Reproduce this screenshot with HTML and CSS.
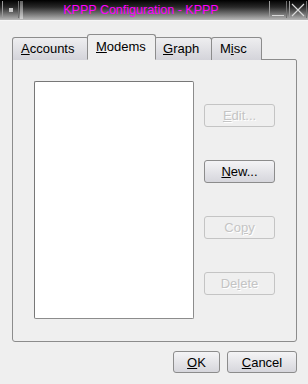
FILE: index.html
```html
<!DOCTYPE html>
<html lang="en">
<head>
    <meta charset="UTF-8">
    <title>KPPP Configuration - KPPP</title>
    <link rel="stylesheet" href="styles.css">
</head>
<body>
    <div class="window">
        <div class="titlebar">
            <div class="tb-btn tb-menu"><span class="dot"></span></div>
            <div class="tb-sep"></div>
            <div class="tb-title">KPPP Configuration - KPPP</div>
            <div class="tb-btn tb-min"><span class="bar"></span></div>
            <div class="tb-btn tb-close">
                <svg width="16" height="16" viewBox="0 0 16 16"><path d="M2 2 L14 14 M14 2 L2 14" stroke="#d8d8d8" stroke-width="1.2" fill="none"/></svg>
            </div>
        </div>

        <div class="body">
            <div class="tabs">
                <div class="tab"><u>A</u>ccounts</div>
                <div class="tab active"><u>M</u>odems</div>
                <div class="tab"><u>G</u>raph</div>
                <div class="tab">M<u>i</u>sc</div>
            </div>
            <div class="panel">
                <div class="listbox"></div>
                <div class="side">
                    <button class="btn" disabled><u>E</u>dit...</button>
                    <button class="btn"><u>N</u>ew...</button>
                    <button class="btn" disabled>Co<u>p</u>y</button>
                    <button class="btn" disabled>De<u>l</u>ete</button>
                </div>
            </div>
            <div class="footer">
                <button class="btn ok"><u>O</u>K</button>
                <button class="btn cancel"><u>C</u>ancel</button>
            </div>
        </div>
    </div>
</body>
</html>
```

FILE: styles.css
```css
body {
    margin: 0;
    background-color: #efefef;
    font-family: "Liberation Sans", Arial, sans-serif;
    font-size: 13px;
    color: #000;
}
.window {
    width: 308px;
    height: 384px;
}

/* title bar */
.titlebar {
    display: flex;
    height: 19px;
    padding-top: 1px;
    font-size: 12.5px;
    background: linear-gradient(#000 0%, #282828 35%, #808080 75%, #b8b8b8 100%);
    border-bottom: 1px solid #f6f6f6;
}
.tb-btn {
    width: 16px;
    height: 17px;
    border-left: 1px solid #9a9a9a;
    border-right: 1px solid #707070;
    display: flex;
    align-items: center;
    justify-content: center;
    box-sizing: border-box;
}
.tb-menu {
    margin-left: 2px;
    width: 17px;
}
.tb-menu .dot {
    flex: none;
    width: 4px;
    height: 4px;
    background: #c8c8c8;
}
.tb-sep {
    width: 3px;
    margin-left: 1px;
    height: 18px;
    background: linear-gradient(#606060, #d0d0d0);
}
.tb-title {
    flex: 1;
    text-align: center;
    color: #ff00ff;
    line-height: 18px;
    padding-right: 10px;
}
.tb-min {
    width: 18px;
    align-items: flex-end;
}
.tb-min .bar {
    width: 12px;
    height: 1px;
    background: #d8d8d8;
    margin-bottom: 2px;
}
.tb-close {
    width: 18px;
    margin-left: 2px;
    margin-right: 1px;
}

/* dialog body */
.body {
    padding: 13px 11px 0 12px;
}
.tabs {
    display: flex;
    align-items: flex-end;
    height: 26px;
    margin-bottom: -1px;
    position: relative;
    z-index: 1;
}
.tab {
    height: 23px;
    line-height: 21px;
    padding: 0 8px;
    box-sizing: border-box;
    border: 1px solid #8c8c8c;
    border-bottom: none;
    border-radius: 3px 3px 0 0;
    background: linear-gradient(#eeeef0, #d4d4da);
    margin-right: -1px;
}
.tab:nth-child(1) { width: 77px; }
.tab:nth-child(3) { width: 58px; }
.tab:nth-child(4) { width: 51px; }
.tab.active {
    width: 69px;
    height: 26px;
    line-height: 23px;
    background: #efefef;
    border-bottom: 1px solid #efefef;
    margin-left: -1px;
    margin-right: -2px;
    position: relative;
    z-index: 2;
}
.panel {
    display: flex;
    width: 285px;
    height: 283px;
    box-sizing: border-box;
    border: 1px solid #8c8c8c;
    border-radius: 0 2px 3px 3px;
    padding: 21px 0 0 21px;
    gap: 10px;
}
.listbox {
    width: 160px;
    height: 238px;
    box-sizing: border-box;
    background: #fff;
    border: 1px solid #8c8c8c;
    border-top-color: #777;
    border-left-color: #777;
    border-radius: 2px;
}
.side {
    display: flex;
    flex-direction: column;
    gap: 33px;
    padding-top: 23px;
}
.btn {
    width: 71px;
    height: 23px;
    padding: 0;
    font: inherit;
    color: #000;
    border: 1px solid #8c8c8c;
    border-radius: 3px;
    background: linear-gradient(#f4f4f6, #d6d6dc);
}
.btn:disabled {
    background: #efefef;
    color: #c4c4c4;
    border-color: #c4c4c4;
    text-shadow: 1px 1px 0 #fff;
}
.footer {
    display: flex;
    justify-content: flex-end;
    gap: 7px;
    width: 285px;
    margin-top: 9px;
}
.ok {
    width: 47px;
    height: 22px;
}
.cancel {
    width: 70px;
    height: 22px;
}
```
